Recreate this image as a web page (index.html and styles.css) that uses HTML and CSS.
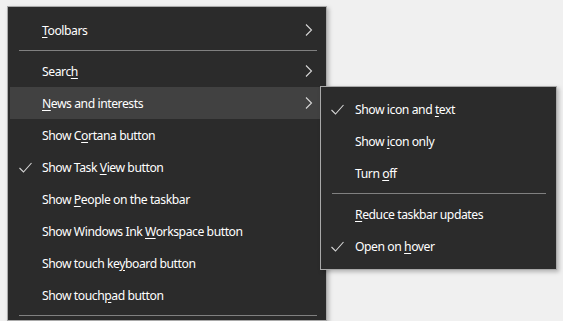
FILE: index.html
```html
<!DOCTYPE html>
<html lang="en">
<head>
    <meta charset="UTF-8">
    <title>Taskbar context menu</title>
    <link rel="stylesheet" href="styles.css">
</head>
<body>
    <div class="menu main-menu">
        <div class="item"><span class="check"></span><span class="label"><u>T</u>oolbars</span><span class="arrow"><svg width="8" height="12" viewBox="0 0 8 12"><polyline points="1,0.5 6.5,6 1,11.5" /></svg></span></div>
        <div class="sep"></div>
        <div class="item"><span class="check"></span><span class="label">Searc<u>h</u></span><span class="arrow"><svg width="8" height="12" viewBox="0 0 8 12"><polyline points="1,0.5 6.5,6 1,11.5" /></svg></span></div>
        <div class="item active"><span class="check"></span><span class="label"><u>N</u>ews and interests</span><span class="arrow"><svg width="8" height="12" viewBox="0 0 8 12"><polyline points="1,0.5 6.5,6 1,11.5" /></svg></span></div>
        <div class="item"><span class="check"></span><span class="label">Show C<u>o</u>rtana button</span></div>
        <div class="item"><span class="check"><svg width="13" height="11" viewBox="0 0 13 11"><polyline points="0.5,6 4.5,10 12.5,1" /></svg></span><span class="label">Show Task <u>V</u>iew button</span></div>
        <div class="item"><span class="check"></span><span class="label">Show <u>P</u>eople on the taskbar</span></div>
        <div class="item"><span class="check"></span><span class="label">Show Windows Ink <u>W</u>orkspace button</span></div>
        <div class="item"><span class="check"></span><span class="label">Show touch ke<u>y</u>board button</span></div>
        <div class="item"><span class="check"></span><span class="label">Show touch<u>p</u>ad button</span></div>
        <div class="sep"></div>
    </div>

    <div class="menu sub-menu">
        <div class="item"><span class="check"><svg width="13" height="11" viewBox="0 0 13 11"><polyline points="0.5,6 4.5,10 12.5,1" /></svg></span><span class="label">Show icon and <u>t</u>ext</span></div>
        <div class="item"><span class="check"></span><span class="label">Show <u>i</u>con only</span></div>
        <div class="item"><span class="check"></span><span class="label">Turn <u>o</u>ff</span></div>
        <div class="sep"></div>
        <div class="item"><span class="check"></span><span class="label"><u>R</u>educe taskbar updates</span></div>
        <div class="item"><span class="check"><svg width="13" height="11" viewBox="0 0 13 11"><polyline points="0.5,6 4.5,10 12.5,1" /></svg></span><span class="label">Open on <u>h</u>over</span></div>
    </div>
</body>
</html>
```

FILE: styles.css
```css
body {
    margin: 0;
    background-color: #f0f0f0;
    font-family: 'Noto Sans', 'Open Sans', sans-serif;
    font-size: 12.2px;
    letter-spacing: -0.45px;
    color: #ffffff;
    height: 321px;
    overflow: hidden;
}

.menu {
    background-color: #2b2b2b;
    border: 1px solid #a9a9a9;
    box-shadow: 2px 2px 4px rgba(0, 0, 0, 0.25);
    box-sizing: border-box;
}

.main-menu {
    margin: 6px 0 0 7px;
    width: 320px;
    padding: 7px 5px 0 2px;
}

.sub-menu {
    position: absolute;
    left: 320px;
    top: 86px;
    width: 237px;
    padding: 6px 1px 7px;
}

.item {
    display: flex;
    align-items: center;
    height: 32px;
}

.item.active {
    background-color: #414141;
}

.check {
    width: 32px;
    display: flex;
    justify-content: flex-end;
    padding-right: 10px;
    box-sizing: border-box;
}

.sub-menu .check {
    width: 33px;
    padding-right: 11px;
}

.check svg polyline,
.arrow svg polyline {
    fill: none;
    stroke: #d6d6d6;
    stroke-width: 1.1;
}

.label {
    flex: 1;
    white-space: nowrap;
}

u {
    text-underline-offset: 2px;
}

.arrow {
    width: 16px;
    display: flex;
}

.sep {
    height: 1px;
    background-color: #808080;
    margin: 4px 4px 4px 9px;
}

.sub-menu .sep {
    margin: 4px 9px 4px 10px;
}
```
